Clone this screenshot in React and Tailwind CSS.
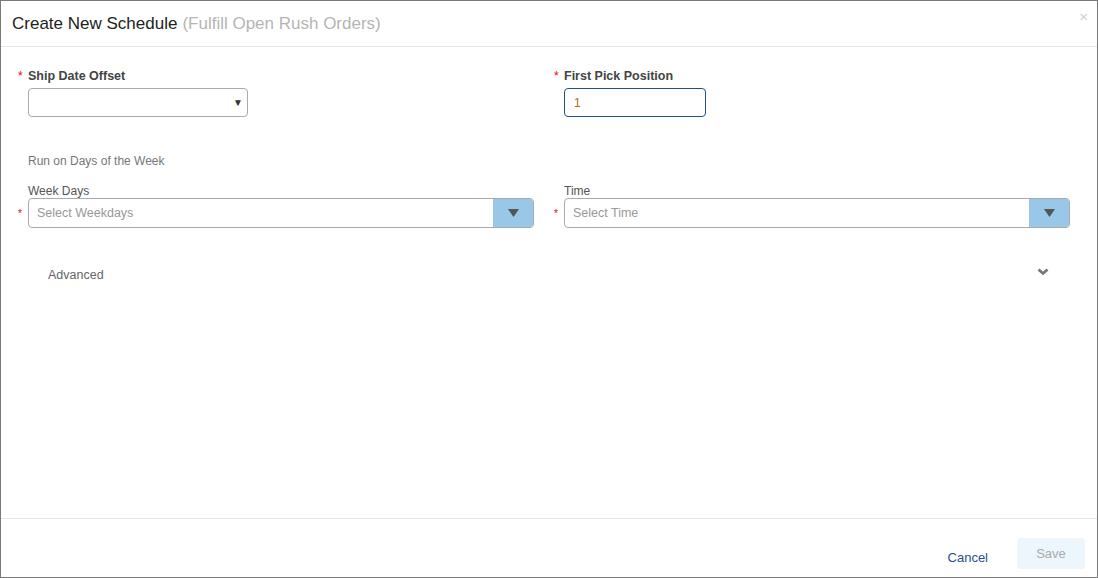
import React from "react";

const Caret = ({ className = "" }) => (
  <svg width="11" height="8" viewBox="0 0 11 8" className={className}>
    <path d="M0 0 L11 0 L5.5 8 Z" fill="#555" />
  </svg>
);

export default function App() {
  return (
    <div
      className="w-[1098px] h-[578px] border border-[#7a7a7a] bg-white flex flex-col text-[12px] text-[#555]"
      style={{ fontFamily: '"Liberation Sans", Arial, sans-serif' }}
    >
      <div className="h-[46px] shrink-0 border-b border-[#e5e5e5] flex items-center px-[11px] relative">
        <span className="text-[17px] text-[#222]">Create New Schedule</span>
        <span className="text-[17px] text-[#b5b5b5] ml-[5px]">(Fulfill Open Rush Orders)</span>
        <span className="absolute right-[9px] top-[5px] text-[15px] text-[#d0d0d0]">×</span>
      </div>

      <div className="flex-1 pl-[15px] pr-[9px] pt-[21px]">
        <div className="grid grid-cols-2">
          <div>
            <div className="flex items-center h-[16px]">
              <span className="w-[12px] pl-[2px] text-[#e00] text-[12px]">*</span>
              <span className="font-bold text-[12.5px] text-[#444]">Ship Date Offset</span>
            </div>
            <div className="ml-[12px] mt-[4px] w-[220px] h-[29px] border border-[#aaa] rounded-[4px] flex items-center justify-end pr-[4px]">
              <span className="text-[10px] text-[#333]">▼</span>
            </div>
          </div>
          <div>
            <div className="flex items-center h-[16px]">
              <span className="w-[12px] pl-[2px] text-[#e00] text-[12px]">*</span>
              <span className="font-bold text-[12.5px] text-[#444]">First Pick Position</span>
            </div>
            <div className="ml-[12px] mt-[4px] w-[142px] h-[29px] border border-[#1e4f8f] rounded-[4px] flex items-center px-[9px]">
              <span className="text-[12px] text-[#b06a2a]">1</span>
            </div>
          </div>
        </div>

        <div className="ml-[12px] mt-[35px] text-[12px] text-[#777]">Run on Days of the Week</div>

        <div className="grid grid-cols-2 mt-[14px]">
          {[
            ["Week Days", "Select Weekdays"],
            ["Time", "Select Time"],
          ].map(([label, ph]) => (
            <div key={label}>
              <div className="ml-[12px] text-[12px] text-[#555] leading-[14px]">{label}</div>
              <div className="flex items-center">
                <span className="w-[12px] pl-[2px] text-[#e00] text-[10px]">*</span>
                <div className="w-[506px] h-[30px] border border-[#aaa] rounded-[4px] flex overflow-hidden">
                  <div className="flex-1 flex items-center px-[8px] text-[12.5px] text-[#999]">{ph}</div>
                  <div className="w-[40px] bg-[#99c7e8] flex items-center justify-center">
                    <Caret />
                  </div>
                </div>
              </div>
            </div>
          ))}
        </div>

        <div className="flex items-center justify-between mt-[38px] pl-[32px] pr-[39px]">
          <span className="text-[12.5px] text-[#666]">Advanced</span>
          <svg width="12" height="8" viewBox="0 0 12 8" className="-mt-[6px]">
            <path d="M1.5 1.5 L6 5.5 L10.5 1.5" stroke="#777" strokeWidth="2.8" fill="none" />
          </svg>
        </div>
      </div>

      <div className="h-[59px] shrink-0 border-t border-[#e5e5e5] flex items-center justify-end pr-[12px] pt-[13px]">
        <span className="text-[13px] text-[#1e4f8f] mr-[29px] mt-[6px]">Cancel</span>
        <div className="w-[68px] h-[31px] rounded-[3px] bg-[#eef6fd] flex items-center justify-center text-[13px] text-[#aaa] -mt-[2px]">
          Save
        </div>
      </div>
    </div>
  );
}
